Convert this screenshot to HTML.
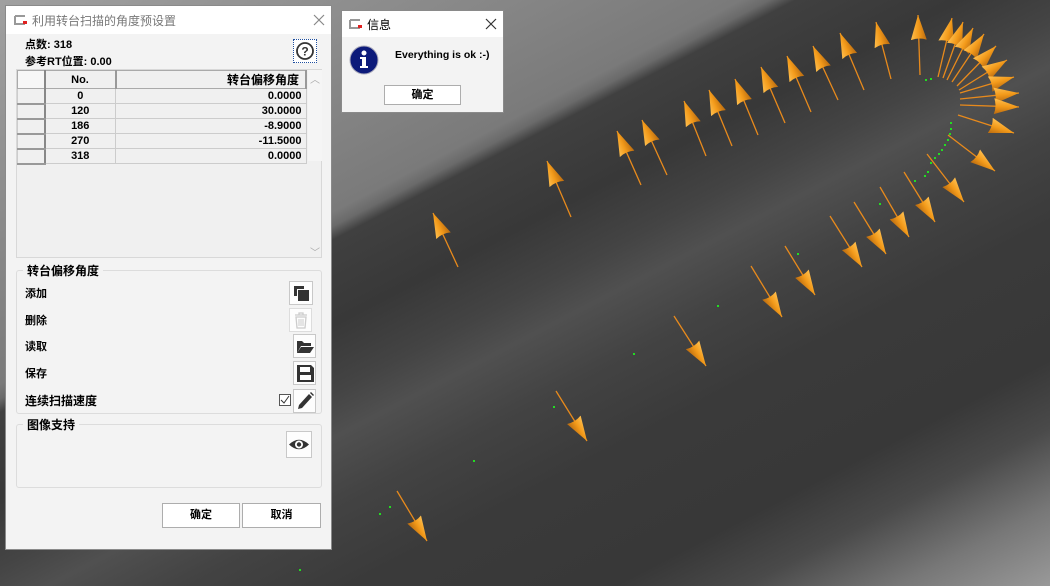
<!DOCTYPE html>
<html><head><meta charset="utf-8"><style>
*{box-sizing:border-box;margin:0;padding:0}
body{width:1050px;height:586px;overflow:hidden;position:relative;font-family:"Liberation Sans","Noto Sans CJK SC",sans-serif;font-size:11px;color:#000;
background:linear-gradient(152.6deg,#a0a0a0 0%,#8a8a8a 20%,#7a7a7a 34%,#6a6a6a 35.3%,#404040 36.5%,#383838 44%,#444 50%,#505050 54%,#434343 60%,#3a3a3a 68%,#383838 80%,#4a4a4a 86%,#777 93%,#999 100%)}
.abs{position:absolute}
svg.scene{position:absolute;left:0;top:0}
.dlg{position:absolute;background:#f3f3f3;border:1px solid #8a8a8a}
.tb{position:absolute;left:0;top:0;right:0;background:#fff}
.b{font-weight:bold}
.btn{position:absolute;background:#fff;border:1px solid #adadad;text-align:center;font-weight:bold}
.ib{position:absolute;background:#fdfdfd;border:1px solid #c8c8c8}
table{border-collapse:collapse}
</style></head><body>
<svg class="scene" width="1050" height="586">
<defs>
<linearGradient id="og" x1="0" y1="0" x2="0" y2="1"><stop offset="0" stop-color="#ffc050"/><stop offset=".5" stop-color="#f39a1a"/><stop offset="1" stop-color="#b86a10"/></linearGradient>
<marker id="ah" markerUnits="userSpaceOnUse" markerWidth="28" markerHeight="18" refX="25" refY="8" orient="auto"><path d="M0,0 L25,8 L0,16 Q3,8 0,0Z" fill="url(#og)"/></marker>
</defs>
<g stroke="#e88a1c" stroke-width="1.3" marker-end="url(#ah)">
<line x1="458" y1="267" x2="433" y2="213"/>
<line x1="571" y1="217" x2="547" y2="161"/>
<line x1="641" y1="185" x2="617" y2="131"/>
<line x1="667" y1="175" x2="642" y2="120"/>
<line x1="706" y1="156" x2="684" y2="101"/>
<line x1="732" y1="146" x2="709" y2="90"/>
<line x1="758" y1="135" x2="735" y2="79"/>
<line x1="785" y1="123" x2="761" y2="67"/>
<line x1="811" y1="112" x2="787" y2="56"/>
<line x1="838" y1="100" x2="813" y2="46"/>
<line x1="864" y1="90" x2="840" y2="33"/>
<line x1="891" y1="79" x2="876" y2="22"/>
<line x1="920" y1="75" x2="918" y2="15"/>
<line x1="938" y1="77" x2="952" y2="18"/>
<line x1="943" y1="78" x2="963" y2="22"/>
<line x1="947" y1="80" x2="973" y2="28"/>
<line x1="952" y1="82" x2="984" y2="34"/>
<line x1="957" y1="86" x2="996" y2="46"/>
<line x1="959" y1="90" x2="1007" y2="60"/>
<line x1="960" y1="93" x2="1014" y2="77"/>
<line x1="960" y1="99" x2="1019" y2="93"/>
<line x1="960" y1="105" x2="1019" y2="107"/>
<line x1="958" y1="115" x2="1014" y2="133"/>
<line x1="948" y1="135" x2="995" y2="171"/>
<line x1="927" y1="154" x2="964" y2="202"/>
<line x1="904" y1="172" x2="935" y2="222"/>
<line x1="880" y1="187" x2="909" y2="237"/>
<line x1="854" y1="202" x2="886" y2="254"/>
<line x1="830" y1="216" x2="862" y2="267"/>
<line x1="785" y1="246" x2="815" y2="295"/>
<line x1="751" y1="266" x2="782" y2="317"/>
<line x1="674" y1="316" x2="706" y2="366"/>
<line x1="556" y1="391" x2="587" y2="441"/>
<line x1="397" y1="491" x2="427" y2="541"/>
</g>
<g fill="#22dd22">
<rect x="925" y="79" width="2" height="2"/><rect x="930" y="78" width="2" height="2"/>
<rect x="950" y="122" width="2" height="2"/><rect x="950" y="128" width="2" height="2"/><rect x="949" y="133" width="2" height="2"/><rect x="947" y="139" width="2" height="2"/><rect x="944" y="144" width="2" height="2"/><rect x="941" y="149" width="2" height="2"/><rect x="938" y="153" width="2" height="2"/><rect x="934" y="157" width="2" height="2"/><rect x="930" y="162" width="2" height="2"/><rect x="927" y="171" width="2" height="2"/><rect x="924" y="175" width="2" height="2"/><rect x="914" y="180" width="2" height="2"/>
<rect x="879" y="203" width="2" height="2"/><rect x="797" y="253" width="2" height="2"/><rect x="717" y="305" width="2" height="2"/><rect x="633" y="353" width="2" height="2"/><rect x="553" y="406" width="2" height="2"/><rect x="473" y="460" width="2" height="2"/><rect x="389" y="506" width="2" height="2"/><rect x="379" y="513" width="2" height="2"/><rect x="299" y="569" width="2" height="2"/>
</g>
</svg>

<!-- main dialog -->
<div class="dlg" style="left:5px;top:5px;width:327px;height:545px">
 <div class="tb" style="height:28px">
  <svg class="abs" style="left:8px;top:9px" width="14" height="10"><path d="M1,1H11M1,1V9H11" stroke="#999" stroke-width="2" fill="none"/><rect x="9" y="6" width="4" height="3" fill="#e02020"/></svg>
  <div class="abs" style="left:26px;top:6px;font-size:12px;color:#777">利用转台扫描的角度预设置</div>
  <svg class="abs" style="left:307px;top:8px" width="12" height="12"><path d="M1,1L11,11M11,1L1,11" stroke="#888" stroke-width="1.2"/></svg>
 </div>
 <div class="abs b" style="left:19px;top:30px">点数: 318</div>
 <div class="abs b" style="left:19px;top:47px">参考RT位置: 0.00</div>
 <div class="abs" style="left:287px;top:33px;width:24px;height:24px;border:1px dotted #2050a0;background:#fff">
  <svg width="22" height="22"><circle cx="11" cy="11" r="8" fill="none" stroke="#333" stroke-width="1.8"/><text x="11" y="15.5" text-anchor="middle" font-family="Liberation Sans" font-weight="bold" font-size="12" fill="#333">?</text></svg>
 </div>
 <div class="abs" style="left:10px;top:63px;width:306px;height:189px;background:#f0f0f0;border:1px solid #d8d8d8">
  <table class="abs" style="left:0;top:0;width:290px">
   <tr style="height:15px"><td style="width:27px;border:1px solid #aaa;border-right:2px solid #888;background:#f7f7f7"></td><td class="b" style="width:71px;text-align:center;border:1px solid #aaa;border-right:2px solid #999">No.</td><td class="b" style="text-align:right;padding-right:6px;border:1px solid #aaa;border-right:2px solid #999;font-size:12px">转台偏移角度</td></tr>
   <tr style="height:15px"><td style="border:1px solid #ccc;border-right:2px solid #888;border-bottom:2px solid #999"></td><td class="b" style="text-align:center;border:1px solid #ccc">0</td><td class="b" style="text-align:right;padding-right:4px;border:1px solid #ccc">0.0000</td></tr>
   <tr style="height:15px"><td style="border:1px solid #ccc;border-right:2px solid #888;border-bottom:2px solid #999"></td><td class="b" style="text-align:center;border:1px solid #ccc">120</td><td class="b" style="text-align:right;padding-right:4px;border:1px solid #ccc">30.0000</td></tr>
   <tr style="height:15px"><td style="border:1px solid #ccc;border-right:2px solid #888;border-bottom:2px solid #999"></td><td class="b" style="text-align:center;border:1px solid #ccc">186</td><td class="b" style="text-align:right;padding-right:4px;border:1px solid #ccc">-8.9000</td></tr>
   <tr style="height:15px"><td style="border:1px solid #ccc;border-right:2px solid #888;border-bottom:2px solid #999"></td><td class="b" style="text-align:center;border:1px solid #ccc">270</td><td class="b" style="text-align:right;padding-right:4px;border:1px solid #ccc">-11.5000</td></tr>
   <tr style="height:15px"><td style="border:1px solid #ccc;border-right:2px solid #888;border-bottom:2px solid #999"></td><td class="b" style="text-align:center;border:1px solid #ccc">318</td><td class="b" style="text-align:right;padding-right:4px;border:1px solid #ccc">0.0000</td></tr>
  </table>
  <div class="abs" style="left:291px;top:0;width:14px;height:91px;background:#f5f5f5"></div>
  <div class="abs" style="left:293px;top:1px;color:#aaa;font-size:10px">︿</div>
  <div class="abs" style="left:293px;top:174px;color:#aaa;font-size:10px">﹀</div>
 </div>

 <div class="abs" style="left:10px;top:264px;width:306px;height:144px;border:1px solid #dcdcdc;border-radius:3px"></div>
 <div class="abs b" style="left:17px;top:256px;background:#f3f3f3;padding:0 4px;font-size:12px">转台偏移角度</div>
 <div class="abs b" style="left:19px;top:279px">添加</div>
 <div class="abs b" style="left:19px;top:306px">删除</div>
 <div class="abs b" style="left:19px;top:332px">读取</div>
 <div class="abs b" style="left:19px;top:359px">保存</div>
 <div class="abs b" style="left:19px;top:386px;font-size:12px">连续扫描速度</div>
 <div class="ib" style="left:283px;top:275px;width:24px;height:24px"><svg width="22" height="22"><path d="M4,4H14V7H7V14H4Z" fill="#333"/><rect x="8" y="8" width="11" height="11" fill="#333"/></svg></div>
 <div class="ib" style="left:283px;top:302px;width:23px;height:24px;border-color:#ddd"><svg width="22" height="22"><path d="M5,6H17M9,6V4H13V6M6,8L7,19H15L16,8Z" fill="none" stroke="#ccc" stroke-width="1.3"/><path d="M9,10V17M11,10V17M13,10V17" stroke="#ccc"/></svg></div>
 <div class="ib" style="left:287px;top:328px;width:23px;height:24px"><svg width="22" height="22"><path d="M3,6H8L10,8H17V11H7L3,18Z" fill="#333"/><path d="M7,12H20L16,18H3Z" fill="#333"/></svg></div>
 <div class="ib" style="left:287px;top:355px;width:23px;height:24px"><svg width="22" height="22"><path d="M3,3H17L20,6V20H3Z" fill="#333"/><rect x="6" y="5" width="10" height="5" fill="#fff"/><rect x="6" y="13" width="11" height="5" fill="#fff"/></svg></div>
 <div class="abs" style="left:273px;top:388px;width:12px;height:12px;border:1px solid #555;background:#fff"><svg width="10" height="10" style="display:block"><path d="M1,5L4,8L9,1" fill="none" stroke="#333" stroke-width="1"/></svg></div>
 <div class="ib" style="left:287px;top:383px;width:23px;height:24px"><svg width="22" height="22"><path d="M4,19L5,15L15,4L18,7L8,18Z" fill="#333"/><path d="M16,3L17,2L20,5L19,6Z" fill="#333"/></svg></div>

 <div class="abs" style="left:10px;top:418px;width:306px;height:64px;border:1px solid #dcdcdc;border-radius:3px"></div>
 <div class="abs b" style="left:17px;top:410px;background:#f3f3f3;padding:0 4px;font-size:12px">图像支持</div>
 <div class="ib" style="left:280px;top:425px;width:26px;height:27px"><svg width="24" height="25"><path d="M2,12.5Q12,3 22,12.5Q12,22 2,12.5Z" fill="#333"/><circle cx="12" cy="12.5" r="4" fill="#fff"/><circle cx="12" cy="12.5" r="2.2" fill="#333"/></svg></div>

 <div class="btn" style="left:156px;top:497px;width:78px;height:25px;line-height:23px">确定</div>
 <div class="btn" style="left:236px;top:497px;width:79px;height:25px;line-height:23px">取消</div>
</div>

<!-- info dialog -->
<div class="dlg" style="left:341px;top:10px;width:163px;height:103px">
 <div class="tb" style="height:26px">
  <svg class="abs" style="left:7px;top:8px" width="14" height="10"><path d="M1,1H11M1,1V9H11" stroke="#999" stroke-width="2" fill="none"/><rect x="9" y="6" width="4" height="3" fill="#e02020"/></svg>
  <div class="abs" style="left:25px;top:5px;font-size:12px">信息</div>
  <svg class="abs" style="left:143px;top:7px" width="12" height="12"><path d="M1,1L11,11M11,1L1,11" stroke="#333" stroke-width="1.2"/></svg>
 </div>
 <svg class="abs" style="left:7px;top:34px" width="32" height="32"><circle cx="15" cy="15" r="14" fill="#0c1a7a" stroke="#aab" stroke-width="1"/><circle cx="15" cy="8" r="2.5" fill="#fff"/><path d="M11,12H17V21H19V23H11V21H13V14H11Z" fill="#fff"/></svg>
 <div class="abs b" style="left:53px;top:38px;font-size:10.5px">Everything is ok :-)</div>
 <div class="btn" style="left:42px;top:74px;width:77px;height:20px;line-height:18px">确定</div>
</div>
</body></html>
